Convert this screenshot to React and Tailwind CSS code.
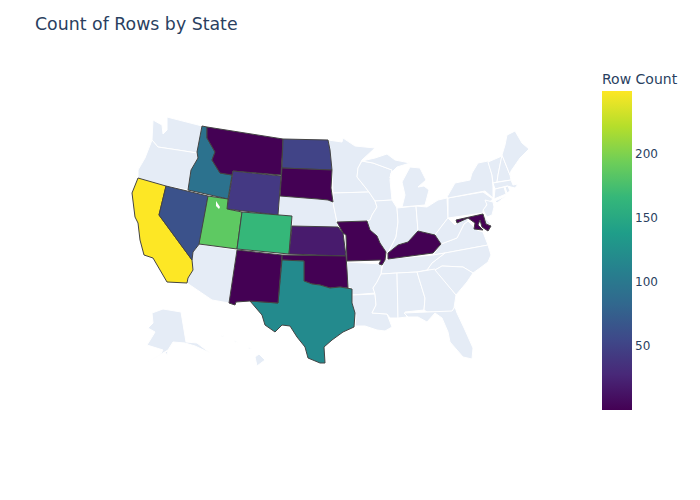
const LAND = '#e5ecf6';

// page-coordinate outlines, viewBox of the map starts at 120,110
const plainStates = [
  ['WA', '153,120 162,125 163,134 167,130 167,117 202,126 197,153 178,150 158,147 152,140'],
  ['OR', '152,140 158,147 178,150 197,153 198,158 191,170 188,190 166,186 138,178 138,170 145,158'],
  ['AZ', '199,244 237,250 229,303 212,300 187,283 188,278 193,270 191,260 193,252'],
  ['NE', '280,196 318,199 328,200 333,202 336,217 338,227 292,226 292,216 278,215'],
  ['MN', '328,140 342,142 343,138 355,146 375,148 362,160 358,168 357,177 369,192 333,193 332,170'],
  ['IA', '333,193 369,192 375,201 377,207 372,215 370,220 367,221 337,222 333,203'],
  ['WI', '362,161 373,163 392,170 390,180 392,200 375,201 369,192 357,177 358,168'],
  ['IL', '375,201 392,200 397,208 398,222 396,237 388,253 386,252 380,243 377,236 370,230 367,221 370,220 372,215 377,207'],
  ['IN', '397,208 416,206 418,231 408,242 398,245 388,253 396,237 398,222'],
  ['OH', '416,206 427,207 438,200 447,198 448,218 441,227 435,235 418,231'],
  ['MI', '410,167 420,168 426,180 418,187 424,186 429,190 425,205 402,207 405,195 402,182'],
  ['MI2', '362,161 375,158 387,154 395,160 410,163 397,167 391,173 390,178 392,170 373,163'],
  ['PA', '448,198 483,192 493,199 487,204 483,211 483,213 448,218'],
  ['NY', '447,197 455,183 470,180 472,173 478,163 488,161 492,175 493,187 493,198 485,191 448,198'],
  ['LI', '495,201 506,196 497,203'],
  ['VT', '488,162 502,156 500,165 498,175 497,182 493,183 492,175'],
  ['NH', '502,155 510,175 511,180 497,182 498,175 500,165'],
  ['ME', '507,135 515,131 522,143 529,149 520,158 511,171 510,175 502,155 505,145'],
  ['MA', '493,183 511,180 513,185 518,184 515,188 507,186 495,189'],
  ['CT', '495,189 504,187 506,194 494,199'],
  ['RI', '505,187 508,186 510,191 507,193'],
  ['NJ', '485,200 493,202 494,207 492,215 487,217 483,210 487,205'],
  ['DE', '484,214 487,220 492,225 486,224'],
  ['VA', '433,255 445,253 488,245 483,232 477,230 468,221 464,224 457,238 441,244'],
  ['WV', '448,218 455,225 457,223 468,218 468,221 464,224 457,238 441,244 435,235 441,227'],
  ['NC', '427,270 432,263 445,253 488,245 491,255 488,262 480,268 473,273 463,267 442,266 435,270'],
  ['TN', '388,259 433,255 445,253 432,263 427,270 417,272 397,273 381,274 383,264 385,260'],
  ['AR', '347,262 382,264 381,274 377,282 373,288 375,293 352,295 351,288 347,287'],
  ['LA', '352,295 375,294 376,305 372,313 387,314 392,327 385,331 377,330 365,326 355,326 356,315 352,307'],
  ['MS', '381,274 397,273 398,318 390,318 387,314 372,313 376,305 375,294 373,288 377,282'],
  ['AL', '397,273 417,272 425,298 424,310 405,312 407,317 398,318'],
  ['GA', '417,272 435,269 456,295 454,308 452,312 427,312 424,310 425,298'],
  ['SC', '435,270 442,266 463,267 473,273 467,282 456,295'],
  ['FL', '404,313 427,312 452,311 455,307 457,313 465,330 473,348 472,359 463,357 450,342 448,332 442,318 435,313 427,322 418,317 408,317'],
  ['AK', '152,313 163,309 181,312 186,342 197,343 210,353 195,346 185,343 173,342 168,350 146,363 160,355 163,350 147,345 152,337 155,332 148,328 153,323'],
  ['KODIAK', '165,352 168,351 167,355'],
  ['HI', '255,357 259,354 265,360 257,366'],
  ['HI2', '221,335 224,336 222,337'],
  ['HI3', '234,340 238,343 235,342'],
  ['HI4', '248,347 252,349 249,349'],
];

const dataStates = [
  ['CA', '#fde725', '138,178 166,186 159,215 192,260 193,270 188,278 187,283 167,282 160,270 153,258 144,255 140,240 138,223 135,217 132,193'],
  ['NV', '#3b528b', '166,186 208,196 200,243 193,252 192,260 159,215'],
  ['ID', '#2c728e', '202,126 207,127 207,138 215,152 212,160 220,173 232,175 228,199 188,190 191,170 198,158 197,152'],
  ['MT', '#440154', '207,127 283,139 281,175 233,171 232,175 220,173 212,160 215,152 207,138'],
  ['WY', '#443983', '233,171 281,176 278,215 227,209'],
  ['UT', '#5ec962', '208,196 228,199 227,209 242,212 237,249 199,244'],
  ['CO', '#35b779', '242,212 292,216 289,254 237,249'],
  ['ND', '#414487', '283,139 328,140 330,150 332,170 282,168'],
  ['SD', '#440154', '282,168 332,170 331,188 333,202 328,200 318,199 280,196'],
  ['KS', '#481b6d', '292,226 338,227 343,233 346,256 289,254'],
  ['OK', '#440154', '282,255 346,256 347,270 348,288 340,287 330,288 320,285 312,284 304,281 304,261 282,260'],
  ['TX', '#238a8d', '282,260 304,261 304,281 312,284 320,285 330,288 340,287 352,289 352,303 355,313 354,327 343,332 332,340 324,347 325,363 320,363 308,358 305,347 297,337 290,326 282,325 275,332 265,325 262,315 250,301 278,303'],
  ['NM', '#440154', '237,250 282,255 278,303 250,301 236,302 235,305 229,303'],
  ['MO', '#440154', '337,222 367,221 370,230 377,236 380,243 386,252 385,260 382,265 379,264 381,260 347,261 346,235 343,233'],
  ['KY', '#440154', '388,253 398,245 408,242 418,231 435,235 441,244 433,253 388,259'],
  ['MD', '#440154', '456,220 483,214 486,224 491,226 488,231 482,227 480,220 478,225 483,230 474,229 475,223 468,218 457,223'],
];

const ticks = ['200', '150', '100', '50'];

const App = () => {
  return (
    <div className="w-[700px] h-[500px] bg-white text-[#2a3f5f] font-['DejaVu_Sans',sans-serif] overflow-hidden">
      <h1 className="pl-[35px] pt-[12px] h-[70px] text-[17.35px] leading-[24px] font-normal">
        Count of Rows by State
      </h1>
      <div className="flex items-start">
        {/* map */}
        <svg
          className="ml-[120px] mt-[40px] shrink-0"
          width="420"
          height="270"
          viewBox="120 110 420 270"
        >
          {plainStates.map(([name, points]) => (
            <polygon key={name} points={points} fill={LAND} stroke="#ffffff" strokeWidth="1" strokeLinejoin="round" />
          ))}
          {dataStates.map(([name, fill, points]) => (
            <polygon key={name} points={points} fill={fill} stroke="#444444" strokeWidth="1" strokeLinejoin="round" />
          ))}
          <polygon points="216,201 220,207 219,209 216,206" fill="#ffffff" />
        </svg>
        {/* color bar */}
        <div className="ml-[62px] w-[90px] shrink-0">
          <div className="h-[21px] text-[14px] leading-[18px] whitespace-nowrap">Row Count</div>
          <div className="flex">
            <div className="w-[30px] h-[319px] bg-[linear-gradient(to_top,#440154,#482878,#3e4989,#31688e,#26828e,#1f9e89,#35b779,#6ece58,#b5de2b,#fde725)]" />
            <div className="pl-[3px] pt-[31px] flex flex-col text-[12px]">
              {ticks.map((tick) => (
                <div key={tick} className="h-[64px] flex items-center">{tick}</div>
              ))}
            </div>
          </div>
        </div>
      </div>
    </div>
  );
};

export default App;
